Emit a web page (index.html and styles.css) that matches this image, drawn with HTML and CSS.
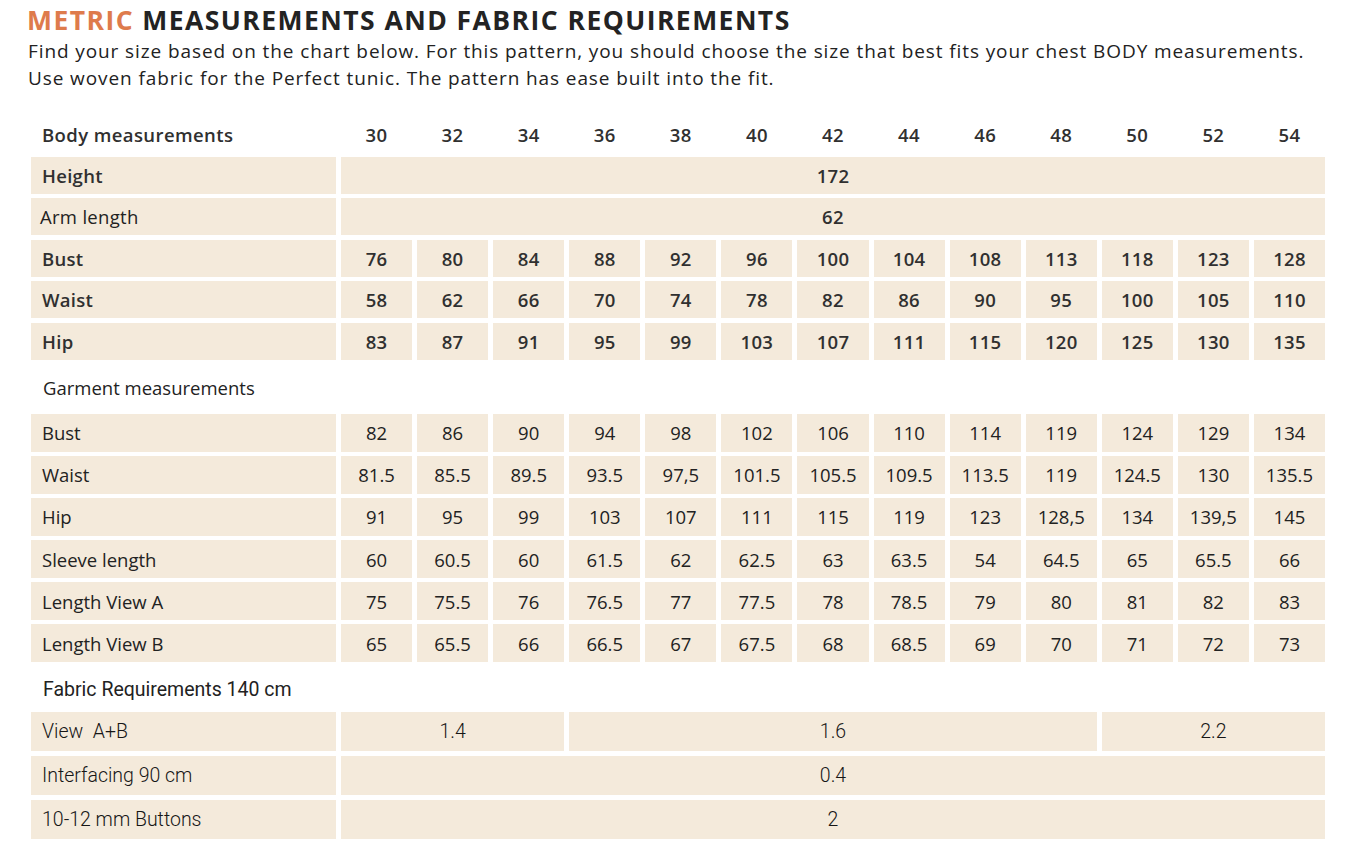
FILE: index.html
```html
<!DOCTYPE html>
<html lang="en">
<head>
<meta charset="utf-8">
<title>Metric measurements and fabric requirements</title>
<link rel="stylesheet" href="styles.css">
</head>
<body>
<main class="page">
  <h1 class="title"><span class="accent">METRIC</span> MEASUREMENTS AND FABRIC REQUIREMENTS</h1>
  <p class="intro">Find your size based on the chart below. For this pattern, you should choose the size that best fits your chest BODY measurements.<br>Use woven fabric for the Perfect tunic. The pattern has ease built into the fit.</p>

  <section class="chart body-chart">
    <div class="grid">
      <div class="head label">Body measurements</div>
      <div class="head">30</div><div class="head">32</div><div class="head">34</div><div class="head">36</div><div class="head">38</div><div class="head">40</div><div class="head">42</div><div class="head">44</div><div class="head">46</div><div class="head">48</div><div class="head">50</div><div class="head">52</div><div class="head">54</div>

      <div class="cell label">Height</div><div class="cell span-all">172</div>
      <div class="cell label label-tight">Arm length</div><div class="cell span-all">62</div>

      <div class="cell label">Bust</div>
      <div class="cell">76</div><div class="cell">80</div><div class="cell">84</div><div class="cell">88</div><div class="cell">92</div><div class="cell">96</div><div class="cell">100</div><div class="cell">104</div><div class="cell">108</div><div class="cell">113</div><div class="cell">118</div><div class="cell">123</div><div class="cell">128</div>

      <div class="cell label">Waist</div>
      <div class="cell">58</div><div class="cell">62</div><div class="cell">66</div><div class="cell">70</div><div class="cell">74</div><div class="cell">78</div><div class="cell">82</div><div class="cell">86</div><div class="cell">90</div><div class="cell">95</div><div class="cell">100</div><div class="cell">105</div><div class="cell">110</div>

      <div class="cell label">Hip</div>
      <div class="cell">83</div><div class="cell">87</div><div class="cell">91</div><div class="cell">95</div><div class="cell">99</div><div class="cell">103</div><div class="cell">107</div><div class="cell">111</div><div class="cell">115</div><div class="cell">120</div><div class="cell">125</div><div class="cell">130</div><div class="cell">135</div>
    </div>
  </section>

  <section class="chart garment-chart">
    <h2 class="section-title">Garment measurements</h2>
    <div class="grid">
      <div class="cell label">Bust</div>
      <div class="cell">82</div><div class="cell">86</div><div class="cell">90</div><div class="cell">94</div><div class="cell">98</div><div class="cell">102</div><div class="cell">106</div><div class="cell">110</div><div class="cell">114</div><div class="cell">119</div><div class="cell">124</div><div class="cell">129</div><div class="cell">134</div>

      <div class="cell label">Waist</div>
      <div class="cell">81.5</div><div class="cell">85.5</div><div class="cell">89.5</div><div class="cell">93.5</div><div class="cell">97,5</div><div class="cell">101.5</div><div class="cell">105.5</div><div class="cell">109.5</div><div class="cell">113.5</div><div class="cell">119</div><div class="cell">124.5</div><div class="cell">130</div><div class="cell">135.5</div>

      <div class="cell label">Hip</div>
      <div class="cell">91</div><div class="cell">95</div><div class="cell">99</div><div class="cell">103</div><div class="cell">107</div><div class="cell">111</div><div class="cell">115</div><div class="cell">119</div><div class="cell">123</div><div class="cell">128,5</div><div class="cell">134</div><div class="cell">139,5</div><div class="cell">145</div>

      <div class="cell label">Sleeve length</div>
      <div class="cell">60</div><div class="cell">60.5</div><div class="cell">60</div><div class="cell">61.5</div><div class="cell">62</div><div class="cell">62.5</div><div class="cell">63</div><div class="cell">63.5</div><div class="cell">54</div><div class="cell">64.5</div><div class="cell">65</div><div class="cell">65.5</div><div class="cell">66</div>

      <div class="cell label">Length View A</div>
      <div class="cell">75</div><div class="cell">75.5</div><div class="cell">76</div><div class="cell">76.5</div><div class="cell">77</div><div class="cell">77.5</div><div class="cell">78</div><div class="cell">78.5</div><div class="cell">79</div><div class="cell">80</div><div class="cell">81</div><div class="cell">82</div><div class="cell">83</div>

      <div class="cell label">Length View B</div>
      <div class="cell">65</div><div class="cell">65.5</div><div class="cell">66</div><div class="cell">66.5</div><div class="cell">67</div><div class="cell">67.5</div><div class="cell">68</div><div class="cell">68.5</div><div class="cell">69</div><div class="cell">70</div><div class="cell">71</div><div class="cell">72</div><div class="cell">73</div>
    </div>
  </section>

  <section class="chart fabric-chart">
    <h2 class="section-title">Fabric Requirements 140 cm</h2>
    <div class="grid">
      <div class="cell label">View&nbsp; A+B</div>
      <div class="cell span-3">1.4</div><div class="cell span-7">1.6</div><div class="cell span-3">2.2</div>
      <div class="cell label">Interfacing 90 cm</div><div class="cell span-all">0.4</div>
      <div class="cell label">10-12 mm Buttons</div><div class="cell span-all">2</div>
    </div>
  </section>
</main>
</body>
</html>
```

FILE: styles.css
```css
* { box-sizing: border-box; }

html, body {
  margin: 0;
  padding: 0;
  background: #ffffff;
}

body {
  font-family: "Open Sans", "Lato", sans-serif;
  color: #222222;
}

.page {
  width: 1352px;
  padding: 5px 0 0 0;
}

.title {
  margin: 0 0 0 27px;
  font-family: "Open Sans", sans-serif;
  font-weight: 700;
  font-size: 26.5px;
  line-height: 31px;
  letter-spacing: 1.45px;
  color: #232323;
}

.accent { color: #de7b4c; }

.intro {
  margin: 2px 0 0 28px;
  font-size: 19px;
  line-height: 27px;
  letter-spacing: 0.9px;
  color: #222222;
}

.chart {
  margin-left: 31px;
  width: 1294px;
}

.grid {
  display: grid;
  grid-template-columns: 305px repeat(13, 1fr);
  column-gap: 5px;
}

.body-chart { margin-top: 23px; }
.body-chart .grid { grid-auto-rows: 37px; row-gap: 4.5px; }
.body-chart .grid > .head { height: 38px; margin-bottom: 0.5px; }

.head {
  display: flex;
  align-items: center;
  justify-content: center;
  font-size: 18.5px;
  font-weight: 600;
  letter-spacing: 0.4px;
  color: #303030;
}

.head.label { justify-content: flex-start; padding-left: 11px; }

.cell {
  background: #f4eadb;
  display: flex;
  align-items: center;
  justify-content: center;
  font-size: 18.5px;
  color: #222;
}

.body-chart .cell { font-weight: 600; letter-spacing: 0.3px; color: #303030; }

.cell.label { justify-content: flex-start; padding-left: 11px; }
.cell.label-tight { padding-left: 9px; font-weight: 400; color: #222; }

.span-all { grid-column: span 13; }
.span-3 { grid-column: span 3; }
.span-7 { grid-column: span 7; }

.section-title {
  margin: 0;
  height: 38px;
  display: flex;
  align-items: center;
  padding-left: 12px;
  font-size: 18.5px;
  font-weight: 400;
  color: #222;
}

.garment-chart { margin-top: 9px; }
.garment-chart .section-title { margin-bottom: 7px; }
.garment-chart .grid { grid-auto-rows: 38px; row-gap: 4.2px; }

.fabric-chart { margin-top: 8px; }
.fabric-chart .section-title { margin-bottom: 4px; font-family: "Roboto", sans-serif; font-size: 19.5px; }
.fabric-chart .grid { grid-auto-rows: 39px; row-gap: 5px; }
.fabric-chart .cell { font-family: "Roboto", sans-serif; font-weight: 300; font-size: 19.5px; color: #161616; }
```
